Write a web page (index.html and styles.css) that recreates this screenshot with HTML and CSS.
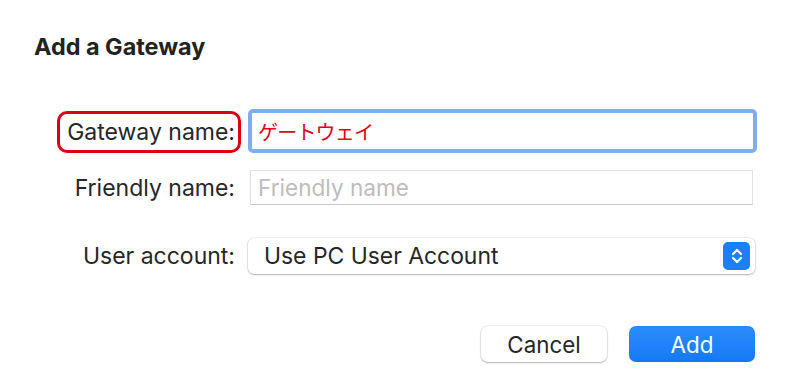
FILE: index.html
```html
<!DOCTYPE html>
<html lang="en">
<head>
<meta charset="utf-8">
<title>Add a Gateway</title>
<link rel="stylesheet" href="styles.css">
</head>
<body>
<div class="dialog">
  <h1 class="title">Add a Gateway</h1>
  <div class="form">
    <div class="row row-gateway">
      <div class="label-cell"><span class="label label-marked">Gateway name:</span></div>
      <div class="field field-focused"><span class="value-jp">ゲートウェイ</span></div>
    </div>
    <div class="row row-friendly">
      <div class="label-cell"><span class="label">Friendly name:</span></div>
      <div class="field field-plain"><span class="placeholder">Friendly name</span></div>
    </div>
    <div class="row row-account">
      <div class="label-cell"><span class="label">User account:</span></div>
      <div class="popup">
        <span class="popup-text">Use PC User Account</span>
        <span class="stepper">
          <svg width="14" height="20" viewBox="0 0 14 20" aria-hidden="true">
            <path d="M3 8 L7 4 L11 8" fill="none" stroke="#fff" stroke-width="2.2" stroke-linecap="round" stroke-linejoin="round"/>
            <path d="M3 12 L7 16 L11 12" fill="none" stroke="#fff" stroke-width="2.2" stroke-linecap="round" stroke-linejoin="round"/>
          </svg>
        </span>
      </div>
    </div>
  </div>
  <div class="buttons">
    <button class="btn btn-cancel">Cancel</button>
    <button class="btn btn-add">Add</button>
  </div>
</div>
</body>
</html>
```
FILE: styles.css
```css
html, body {
  margin: 0;
  padding: 0;
  background: #ffffff;
}
body {
  width: 785px;
  height: 383px;
  overflow: hidden;
  font-family: Inter, "Noto Sans", "Liberation Sans", sans-serif;
  color: #262626;
}
.dialog {
  padding: 33px 28px 0 34px;
}
.title {
  margin: 0;
  font-size: 23.4px;
  line-height: 28px;
  font-weight: 700;
  color: #222222;
}
.form {
  margin-top: 48px;
  display: flex;
  flex-direction: column;
}
.row {
  display: flex;
  align-items: center;
}
.row-gateway { height: 44px; }
.row-friendly { height: 35px; margin-top: 17px; }
.row-account { height: 36px; margin-top: 33px; }
.label-cell {
  width: 207px;
  display: flex;
  justify-content: flex-end;
  flex-shrink: 0;
}
.label {
  font-size: 23px;
  line-height: 36px;
  margin-right: 6px;
  white-space: nowrap;
}
.label-marked {
  margin-right: 0;
  border: 3px solid #dc0012;
  border-radius: 10px;
  padding: 0 3px 0 7px;
  line-height: 36px;
}
.row-gateway .label-cell { align-self: flex-end; }
.field-focused {
  margin-left: 7px;
  width: 509px;
  height: 44px;
  box-sizing: border-box;
  border: 4px solid #7eaef0;
  border-radius: 5px;
  background: #fff;
  display: flex;
  align-items: center;
  padding-left: 6px;
}
.value-jp {
  font-family: "Noto Sans CJK JP", sans-serif;
  font-size: 20px;
  color: #e0001b;
  letter-spacing: -0.8px;
}
.field-plain {
  margin-left: 9px;
  width: 503px;
  height: 35px;
  box-sizing: border-box;
  border: 1px solid #e2e2e2;
  border-bottom-color: #c8c8c8;
  display: flex;
  align-items: center;
  padding-left: 7px;
}
.placeholder {
  font-size: 22.6px;
  color: #bdbdbd;
}
.popup {
  margin-left: 7px;
  width: 507px;
  height: 36px;
  box-sizing: border-box;
  border-radius: 6px;
  background: #fff;
  box-shadow: 0 0 0 0.5px rgba(0,0,0,0.12), 0 1px 2px rgba(0,0,0,0.25);
  display: flex;
  align-items: center;
  justify-content: space-between;
  padding: 0 5px 0 16px;
}
.popup-text {
  font-size: 22.9px;
}
.stepper {
  width: 27px;
  height: 28px;
  border-radius: 5px;
  background: #1b7ff7;
  display: flex;
  align-items: center;
  justify-content: center;
}
.buttons {
  margin-top: 52px;
  display: flex;
  justify-content: flex-end;
  gap: 22px;
  padding-right: 2px;
}
.btn {
  width: 126px;
  height: 36px;
  border: none;
  border-radius: 7px;
  font-family: Inter, "Noto Sans", "Liberation Sans", sans-serif;
  font-size: 22.4px;
  padding: 0;
}
.btn-cancel {
  background: #fff;
  color: #262626;
  box-shadow: 0 0 0 0.5px rgba(0,0,0,0.12), 0 1px 2px rgba(0,0,0,0.25);
}
.btn-add {
  background: linear-gradient(#2b8dfb, #1479f6);
  color: #fff;
}
```
